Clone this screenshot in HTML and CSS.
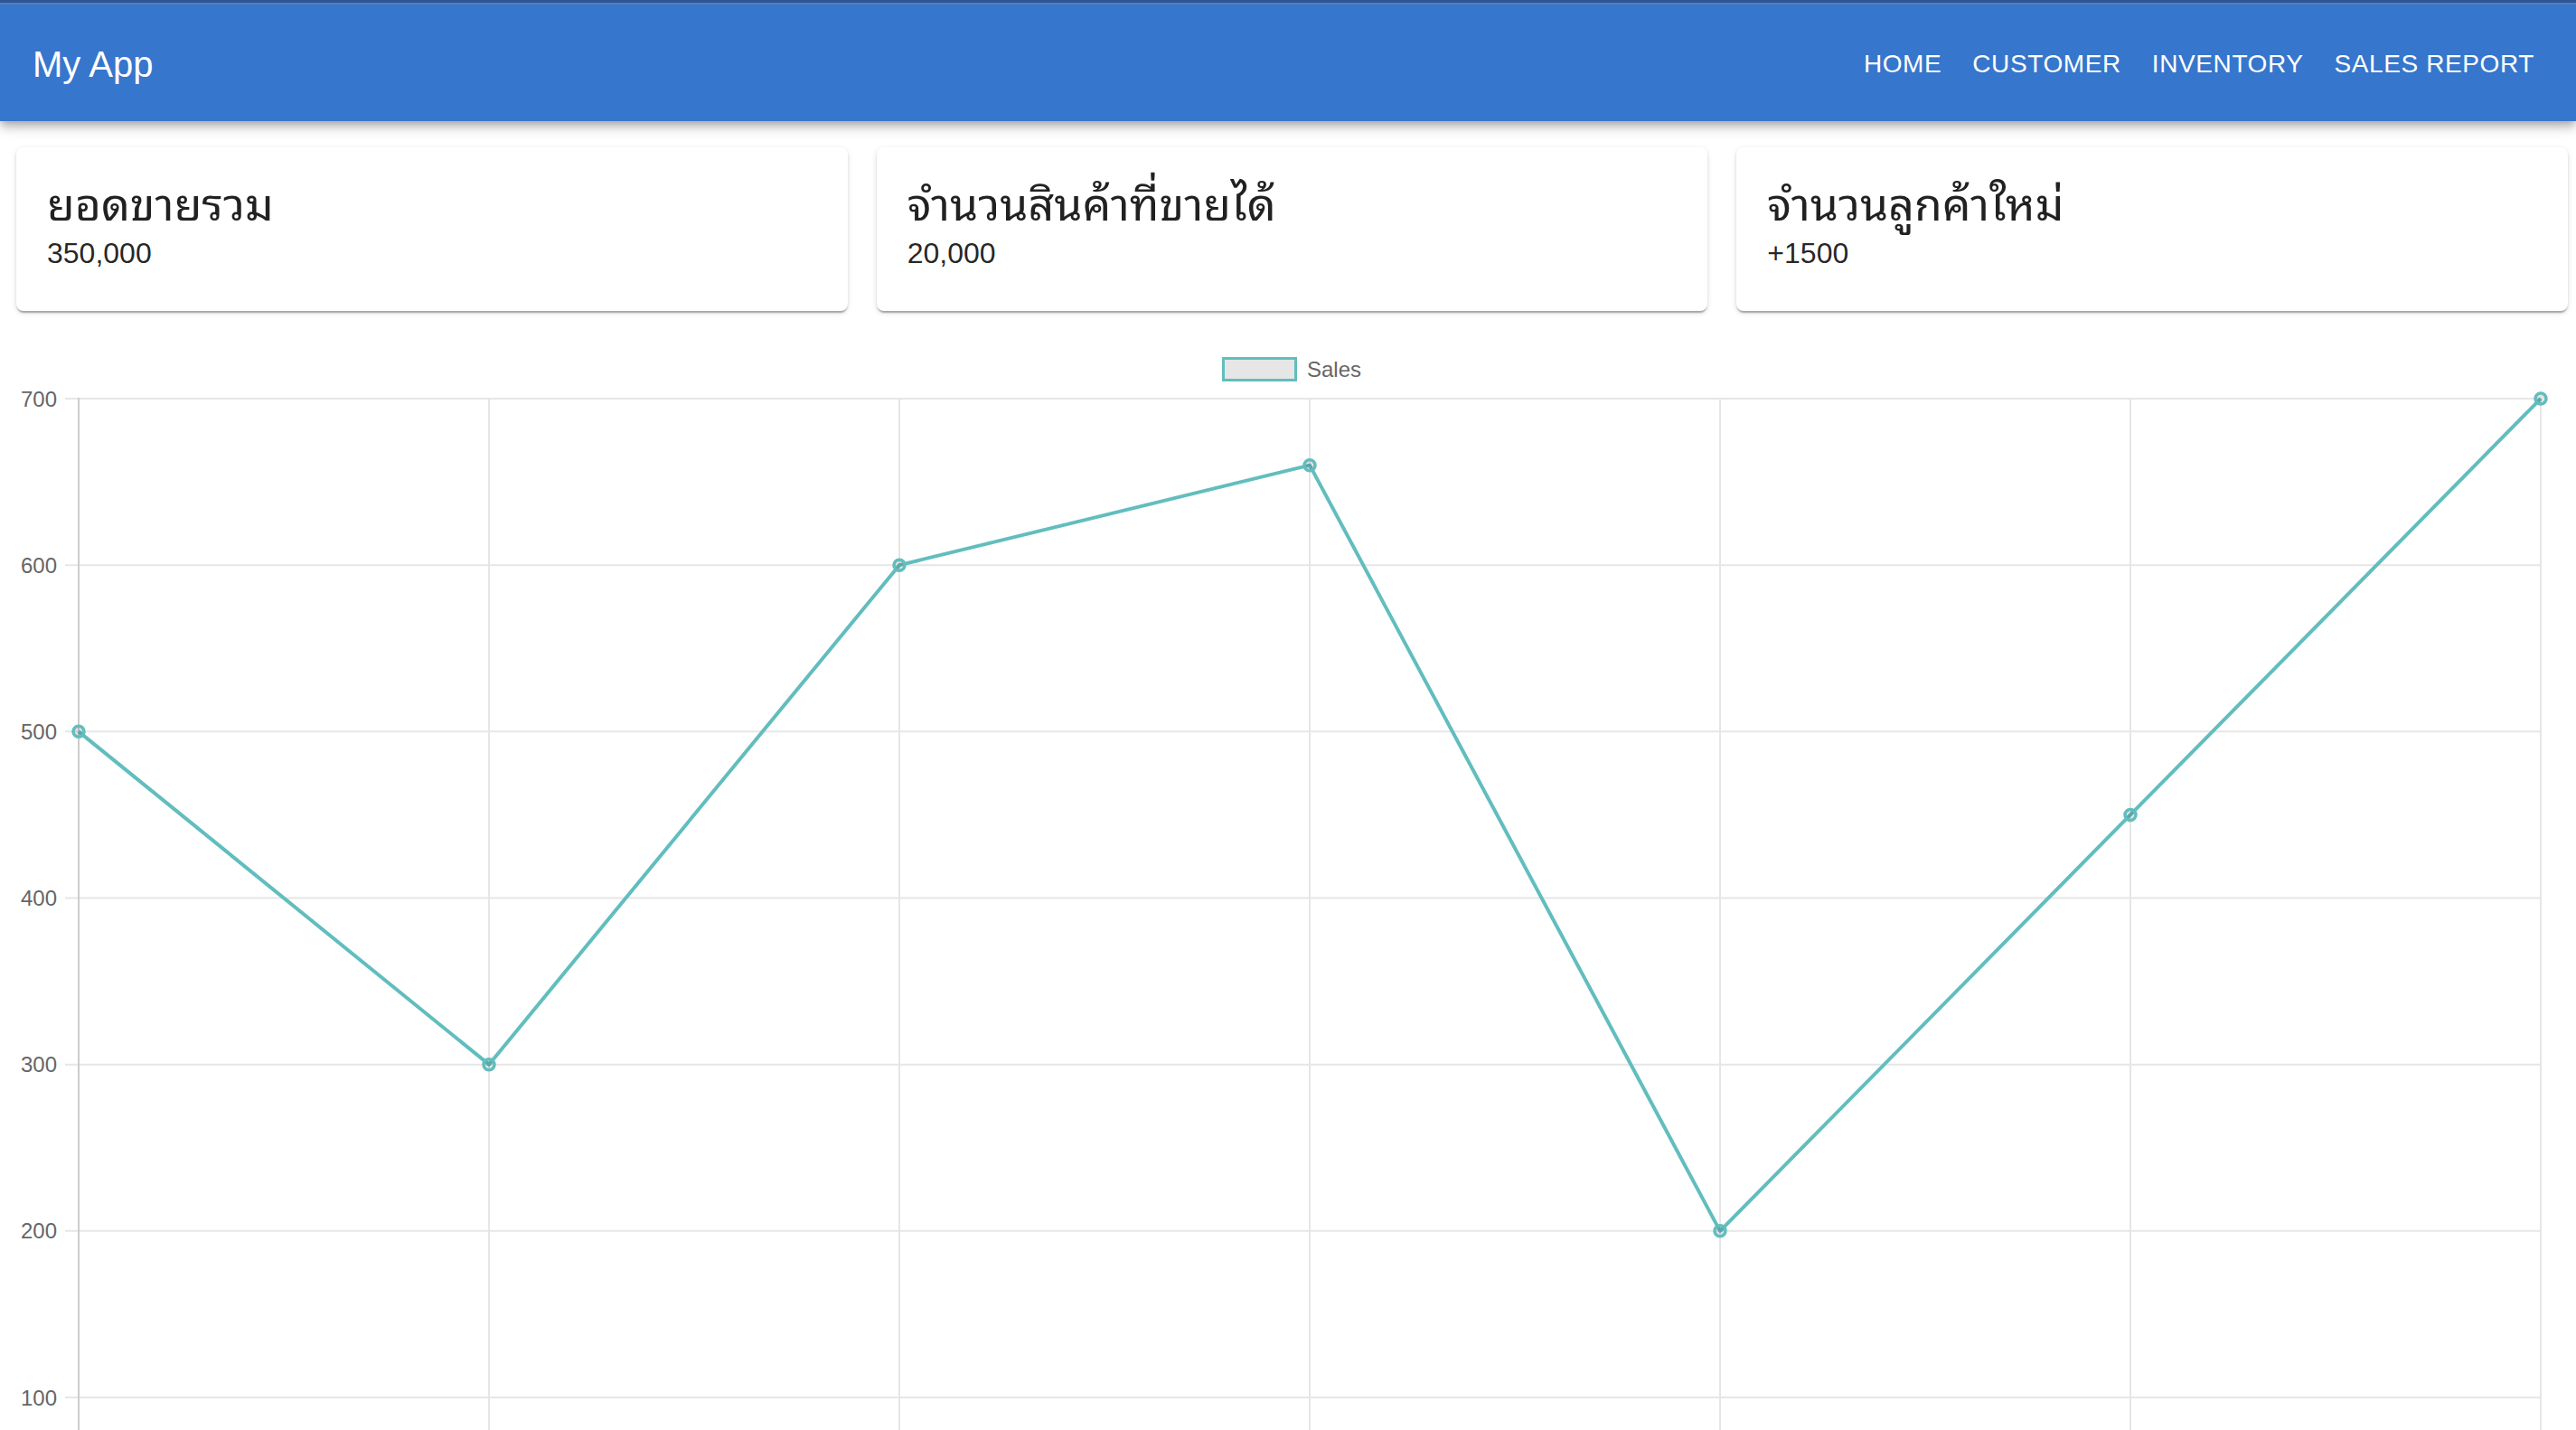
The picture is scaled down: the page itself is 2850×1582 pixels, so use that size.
FILE: index.html
```html
<!DOCTYPE html>
<html lang="th">
<head>
<meta charset="utf-8">
<title>My App</title>
<link rel="stylesheet" href="styles.css">
</head>
<body>
<header class="appbar">
  <div class="toolbar">
    <div class="brand">My App</div>
    <nav class="nav">
      <a class="nav-btn" href="#">Home</a>
      <a class="nav-btn" href="#">Customer</a>
      <a class="nav-btn" href="#">Inventory</a>
      <a class="nav-btn" href="#">Sales Report</a>
    </nav>
  </div>
</header>

<main>
  <section class="cards">
    <div class="card">
      <div class="card-title">ยอดขายรวม</div>
      <div class="card-value">350,000</div>
    </div>
    <div class="card">
      <div class="card-title">จำนวนสินค้าที่ขายได้</div>
      <div class="card-value">20,000</div>
    </div>
    <div class="card">
      <div class="card-title">จำนวนลูกค้าใหม่</div>
      <div class="card-value">+1500</div>
    </div>
  </section>

  <section class="chart">
    <div class="legend">
      <span class="legend-box"></span>
      <span class="legend-label">Sales</span>
    </div>
    <svg class="plot" width="2850" height="1160" viewBox="0 0 2850 1160">
      <g class="grid-h" stroke="#e6e6e6" stroke-width="2">
        <line x1="72" y1="19" x2="2812" y2="19"/>
        <line x1="72" y1="203.17" x2="2812" y2="203.17"/>
        <line x1="72" y1="387.33" x2="2812" y2="387.33"/>
        <line x1="72" y1="571.5" x2="2812" y2="571.5"/>
        <line x1="72" y1="755.67" x2="2812" y2="755.67"/>
        <line x1="72" y1="939.83" x2="2812" y2="939.83"/>
        <line x1="72" y1="1124" x2="2812" y2="1124"/>
      </g>
      <g class="grid-v" stroke="#e6e6e6" stroke-width="2">
        <line x1="541" y1="18" x2="541" y2="1160"/>
        <line x1="995" y1="18" x2="995" y2="1160"/>
        <line x1="1449" y1="18" x2="1449" y2="1160"/>
        <line x1="1903" y1="18" x2="1903" y2="1160"/>
        <line x1="2357" y1="18" x2="2357" y2="1160"/>
        <line x1="2811" y1="18" x2="2811" y2="1160"/>
      </g>
      <line x1="87" y1="18" x2="87" y2="1160" stroke="#cccccc" stroke-width="2"/>
      <g class="ticks" fill="#666666" font-size="24" text-anchor="end">
        <text x="63" y="27.5">700</text>
        <text x="63" y="211.67">600</text>
        <text x="63" y="395.83">500</text>
        <text x="63" y="580">400</text>
        <text x="63" y="764.17">300</text>
        <text x="63" y="948.33">200</text>
        <text x="63" y="1132.5">100</text>
      </g>
      <polyline fill="none" stroke="rgb(98,189,190)" stroke-width="4" stroke-linejoin="round"
        points="87,387.33 541,755.67 995,203.17 1449,92.67 1903,939.83 2357,479.42 2811,19"/>
      <g class="points" fill="rgba(0,0,0,0.1)" stroke="rgb(98,189,190)" stroke-width="3.5">
        <circle cx="87" cy="387.33" r="6"/>
        <circle cx="541" cy="755.67" r="6"/>
        <circle cx="995" cy="203.17" r="6"/>
        <circle cx="1449" cy="92.67" r="6"/>
        <circle cx="1903" cy="939.83" r="6"/>
        <circle cx="2357" cy="479.42" r="6"/>
        <circle cx="2811" cy="19" r="6"/>
      </g>
    </svg>
  </section>
</main>
</body>
</html>
```

FILE: styles.css
```css
html, body {
  margin: 0;
  padding: 0;
  background: #ffffff;
  overflow: hidden;
}

body {
  font-family: "Liberation Sans", Arial, "Noto Sans Thai", "Noto Sans", sans-serif;
  color: rgba(0, 0, 0, 0.87);
}

.appbar {
  position: relative;
  z-index: 2;
  background: #3676cc;
  border-top: 3px solid #2b5798;
  box-shadow: inset 0 2px 0 0 #5a7cb0,
              0 4px 8px -2px rgba(0, 0, 0, 0.2),
              0 8px 10px 0 rgba(0, 0, 0, 0.14),
              0 2px 20px 0 rgba(0, 0, 0, 0.12);
}

.toolbar {
  height: 126px;
  padding: 5px 29px 0 36px;
  display: flex;
  align-items: center;
  justify-content: space-between;
  color: #ffffff;
}

.brand {
  font-size: 40px;
  font-weight: 400;
}

.nav {
  display: flex;
  align-items: center;
}

.nav-btn {
  color: #ffffff;
  text-decoration: none;
  text-transform: uppercase;
  font-size: 28px;
  letter-spacing: 0.6px;
  padding: 0 17px;
}

.cards {
  display: flex;
  gap: 32px;
  padding: 0 9px 0 18px;
  margin-top: 29px;
}

.card {
  flex: 1 1 0;
  background: #ffffff;
  border-radius: 8px;
  padding: 32px 32px 43px 34px;
  box-shadow: 0 4px 2px -2px rgba(0, 0, 0, 0.2),
              0 2px 2px 0 rgba(0, 0, 0, 0.14),
              0 2px 6px 0 rgba(0, 0, 0, 0.12);
}

.card-title {
  font-size: 50px;
  line-height: 64px;
  font-family: "Liberation Sans", "Noto Sans Thai Looped", "Noto Sans Thai", "Noto Sans", sans-serif;
}

.card-value {
  font-size: 32px;
  line-height: 42px;
}

.chart {
  margin-top: 51px;
}

.legend {
  display: flex;
  justify-content: center;
  align-items: center;
  gap: 11px;
  height: 27px;
  padding-left: 8px;
}

.legend-box {
  box-sizing: border-box;
  width: 83px;
  height: 27px;
  border: 3px solid rgb(98, 189, 190);
  background: #e6e6e6;
}

.legend-label {
  font-size: 24px;
  color: #666666;
}

.plot {
  display: block;
  font-family: "Liberation Sans", Arial, sans-serif;
}
```
